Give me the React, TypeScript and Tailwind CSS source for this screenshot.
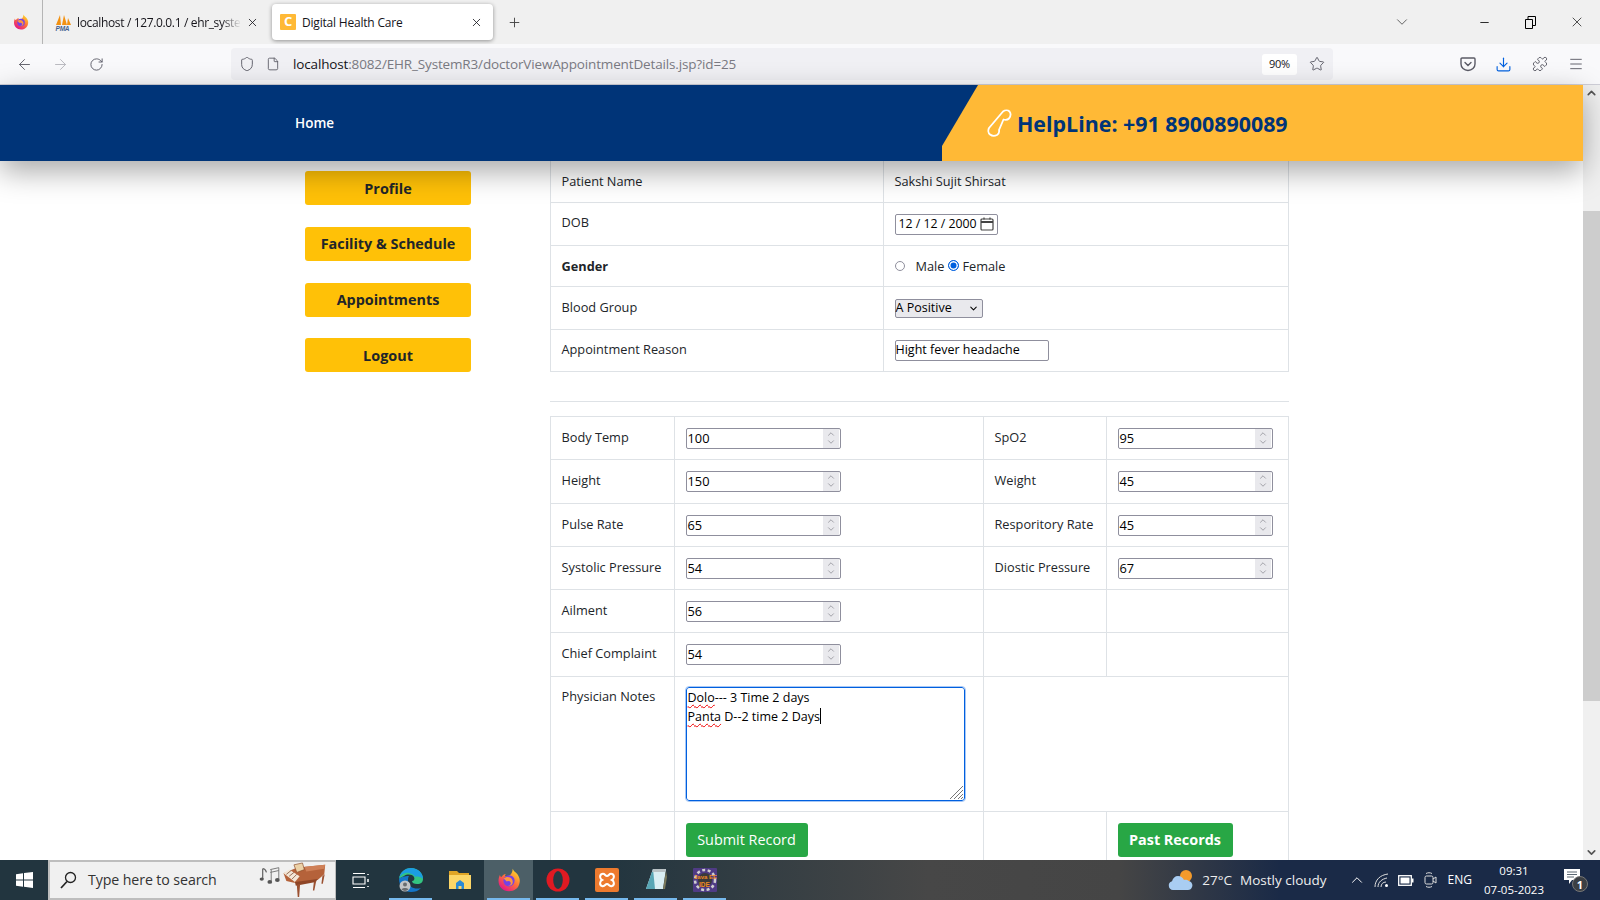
import { ReactNode } from 'react';
import { ChevronDown, ChevronUp, Download, Menu, Minus, Plus, RotateCw, ArrowLeft, ArrowRight, Shield, Star, X, File, Puzzle } from 'lucide-react';

const FirefoxIcon = ({ size }: { size: number }) => (
  <svg width={size} height={size} viewBox="0 0 32 32">
    <defs>
      <linearGradient id="ff-body" x1="0.8" y1="0.1" x2="0.2" y2="0.95">
        <stop offset="0" stopColor="#ffd02c" />
        <stop offset="0.45" stopColor="#ff7139" />
        <stop offset="1" stopColor="#e31587" />
      </linearGradient>
    </defs>
    <path d="M21 1c1 3 3 4 6 7 3 4 4 8 3 12-1 7-7 11-14 11C8 31 2 25 2 17c0-3 1-6 2-8 0 2 1 3 2 3 1-2 3-4 6-4-1 1-2 2-1 3 5 0 9-1 10-10z" fill="url(#ff-body)" />
    <circle cx="16" cy="17" r="7.5" fill="#7542e5" />
    <path d="M9 14c2-2 6-3 9-1 3 2 4 6 2 9-1 1-3 2-5 2 3-1 4-3 3-5-1-2-4-2-5-1l-4-4z" fill="#ff9640" />
  </svg>
);

const PmaIcon = () => (
  <svg width="17" height="17" viewBox="0 0 17 17">
    <path d="M1 11 5 1l1 10zM7 11l2-10 3 10zM12 11l1-7 3 7z" fill="#f29111" />
    <text x="0.5" y="16.5" fontSize="6.5" fontWeight="700" fontStyle="italic" fill="#44618f" fontFamily="Liberation Sans, sans-serif">PMA</text>
  </svg>
);

const PhoneOutline = () => (
  <svg width="25" height="28" viewBox="0 0 25 28" fill="none" stroke="#fff" strokeWidth="1.8" strokeLinejoin="round">
    <path d="M16 2.5c2-1.5 5-1.5 6.5 0 1.5 2 1 5-.5 7-1.500 1.500-3.500 1.500-5.500 1L12 21c.5 2-.5 4-2 5-2 1-5 1-7-.5C1 24 1 21 2 19z" />
  </svg>
);

const PocketIcon = () => (
  <svg width="16" height="16" viewBox="0 0 16 16" fill="none" stroke="#5b5b66" strokeWidth="1.4">
    <path d="M2 2h12a1 1 0 0 1 1 1v5c0 3.500-3 6.500-7 6.500S1 11.500 1 8V3a1 1 0 0 1 1-1z" />
    <path d="m5 6.500 3 3 3-3" strokeLinecap="round" />
  </svg>
);

const WindowsLogo = () => (
  <svg width="17" height="16" viewBox="0 0 17 16" fill="#fff">
    <path d="M0 2.300 7 1.300v6.300H0zM8 1.100 17 0v7.600H8zM0 8.500h7v6.300L0 13.800zM8 8.500h9V16l-9-1.200z" />
  </svg>
);

const SearchGlass = () => (
  <svg width="17" height="18" viewBox="0 0 17 18" fill="none" stroke="#222" strokeWidth="1.300">
    <circle cx="10.500" cy="6.500" r="5" />
    <path d="M7 10.500 1 17" strokeWidth="1.700" />
  </svg>
);

// music notes plus the little grand piano on the search box
const PianoDoodle = () => (
  <svg width="70" height="36" viewBox="0 0 70 38">
    <path d="M3 7v11M3 7c2 0 3 1 4 4" fill="none" stroke="#666" strokeWidth="1.300" />
    <ellipse cx="2" cy="18" rx="2.200" ry="1.700" fill="#555" />
    <path d="M11 8l9-2M11 11l9-2M12 8v12M20 6v12" stroke="#777" strokeWidth="1" fill="none" />
    <ellipse cx="10.500" cy="21" rx="2.500" ry="2" fill="#555" />
    <ellipse cx="18.500" cy="19" rx="2.500" ry="2" fill="#555" />
    <path d="M25 12 39 6l30-3-1 10-7 6-25 3-8-2z" fill="#b5623a" />
    <path d="M47 5l22-2-1 4-19 3z" fill="#cf8058" />
    <path d="M25 12l12 9 5-6-11-7z" fill="#f3e7d7" />
    <path d="M28 13l5-4M31 15l5-4M34 18l5-5" stroke="#7a4a30" strokeWidth="0.800" />
    <path d="M36 3l9-2 2 7-8 3z" fill="#ecd2a8" stroke="#8a4a28" strokeWidth="0.700" />
    <path d="M37 21l24-3-2 3-21 4z" fill="#8e4526" />
    <path d="M39 24l1 13h1.500l1-14zM57 21l-1 9h1.500l2-10zM66 15l-1 8h1.500l2-10z" fill="#9b5030" />
  </svg>
);

const TaskViewIcon = () => (
  <svg width="17" height="17" viewBox="0 0 17 17" fill="none" stroke="#fff" strokeWidth="1.100">
    <path d="M1 1.500h12M1 15.500h12M1 5h12v7H1z" />
    <path d="M16 2v1M16 7v3M16 14v1" strokeWidth="1.500" />
  </svg>
);

const EdgeIcon = () => (
  <svg width="26" height="26" viewBox="0 0 26 26">
    <path d="M1 12C2 5 7 1 13 1c7 0 12 5 12 11 0 3-2 5-6 5-3 0-5-1-5-3 2 0 3-2 2-4-2-3-7-3-10-1-2 1-4 2-5 3z" fill="#33c481" />
    <path d="M13 1C7 1 2 5 1 12c1-4 6-7 10-6 4 1 6 3 6 4 3-1 6 0 8 2 0-6-5-11-12-11z" fill="#1b9de2" />
    <path d="M1 12c0 7 5 13 12 13 4 0 7-1 10-4-6 2-13-1-13-7 0-2 0-4 1-5-4 0-9 1-10 3z" fill="#1475c8" />
    <circle cx="7" cy="19" r="5.500" fill="#c3c5c7" />
    <circle cx="7" cy="17.500" r="2" fill="#6a6d70" />
    <path d="M3.500 22.500c.5-2 6.500-2 7 0a5 5 0 0 1-7 0z" fill="#6a6d70" />
  </svg>
);

const ExplorerIcon = () => (
  <svg width="22" height="20" viewBox="0 0 22 20">
    <path d="M0 1h8l2 2h10v3H0z" fill="#e0a526" />
    <path d="M0 5h22v14H0z" fill="#fcd667" />
    <path d="M7 19v-6l4-3 4 3v6h-2.500v-3h-3v3z" fill="#2b8ad4" />
  </svg>
);

const OperaIcon = () => (
  <svg width="24" height="24" viewBox="0 0 24 24">
    <circle cx="12" cy="12" r="11.500" fill="#e01a22" />
    <ellipse cx="12" cy="12" rx="4.800" ry="9" fill="#263a43" />
  </svg>
);

const XamppIcon = () => (
  <svg width="24" height="24" viewBox="0 0 24 24">
    <rect width="24" height="24" rx="2" fill="#ed7a2e" />
    <path d="M7 6c3-1 3 2 5 2s2-3 5-2c3 1 2 5 0 6 2 1 3 5 0 6-3 1-3-2-5-2s-2 3-5 2c-3-1-2-5 0-6-2-1-3-5 0-6z" fill="none" stroke="#fff" strokeWidth="2" />
  </svg>
);

const NotepadIcon = () => (
  <svg width="24" height="24" viewBox="0 0 24 24">
    <path d="M9 1h13l-3 20H2z" fill="#d9eef3" />
    <path d="M9 1 2 21h9z" fill="#58a6b5" />
    <path d="M9 1h13l-1 3H8z" fill="#b9c2c5" />
    <path d="M19 21l3-18 1 6-2 12z" fill="#7b7a5c" />
  </svg>
);

const JavaEeIcon = () => (
  <svg width="24" height="24" viewBox="0 0 24 24">
    <rect width="24" height="24" rx="1" fill="#4f3b85" />
    <circle cx="12" cy="12" r="10" fill="none" stroke="#cfcfcf" strokeWidth="2.500" strokeDasharray="3 2.500" />
    <circle cx="12" cy="12" r="7" fill="#3a3a3a" />
    <text x="1" y="11" fontSize="6" fontWeight="700" fill="#f08a24" fontFamily="Liberation Sans, sans-serif">Java EE</text>
    <text x="6" y="19" fontSize="6.500" fontWeight="700" fill="#f08a24" fontFamily="Liberation Sans, sans-serif">IDE</text>
  </svg>
);

const WeatherIcon = () => (
  <svg width="26" height="22" viewBox="0 0 26 22">
    <circle cx="18" cy="7" r="6" fill="#f39a2b" />
    <path d="M5 21a4.500 4.500 0 0 1-1-8.800C5 9 7 7 10 7c3 0 5 2 6 4 1-.5 3-.5 5 1 3 1 4 4 3 6-.5 2-2 3-4 3z" fill="#a9cdf2" />
  </svg>
);

const WifiIcon = () => (
  <svg width="17" height="15" viewBox="0 0 17 15" fill="none" stroke="#ddd" strokeWidth="1">
    <path d="M1 14C1 7 6 2 14 1M4 14c0-5 4-8 9-9M7 14c0-3 2-5 5-5" />
    <circle cx="12.500" cy="12.500" r="1.500" fill="#fff" stroke="none" />
  </svg>
);

const BatteryIcon = () => (
  <svg width="16" height="11" viewBox="0 0 16 11">
    <rect x="0.700" y="0.700" width="12.600" height="9.600" fill="none" stroke="#fff" strokeWidth="1.300" />
    <rect x="2.500" y="2.500" width="9" height="6" fill="#fff" />
    <rect x="14" y="3.500" width="1.500" height="4" fill="#fff" />
  </svg>
);

const MeetIcon = () => (
  <svg width="13" height="18" viewBox="0 0 13 18" fill="none" stroke="#ddd" strokeWidth="1">
    <rect x="1" y="5" width="8" height="8" rx="1.500" />
    <path d="m9 8 3-2v6l-3-2M2 2.500c2-1 4-1 6 0M2 15.500c2 1 4 1 6 0" />
  </svg>
);

const NotificationIcon = () => (
  <div className="relative w-[24px] h-[24px]">
    <svg width="16" height="15" viewBox="0 0 16 15" className="absolute left-0 top-0">
      <path d="M0 0h16v11H8l-3 4v-4H0z" fill="#fff" />
      <path d="M3 3h10M3 5.500h10M3 8h7" stroke="#33424f" strokeWidth="0.800" />
    </svg>
    <div className="absolute left-[8px] top-[7px] w-[16px] h-[16px] rounded-full bg-[#3b3f44] border border-[#777] flex items-center justify-center text-white text-[11px] font-bold leading-none">1</div>
  </div>
);

const Cell = ({ children, className = '' }: { children?: ReactNode; className?: string }) => (
  <td className={`border border-[#dee2e6] align-top px-[10.500px] ${className}`}>{children}</td>
);

const Label = ({ children, bold }: { children: ReactNode; bold?: boolean }) => (
  <Cell className={`pt-[10px] leading-[20px] whitespace-nowrap ${bold ? 'font-bold' : ''}`}>{children}</Cell>
);

const NumberField = ({ value }: { value: string }) => (
  <div className="flex items-center w-[155px] h-[21px] border border-[#8f8f9d] rounded-[2px] bg-white text-[12.800px] text-black px-[1px] leading-none">
    <span className="flex-1">{value}</span>
    <span className="w-[16px] h-[19px] bg-[#e9e9ed] flex flex-col items-center justify-center text-[#77777f]">
      <ChevronUp size={10} strokeWidth={1.500} className="-mb-[1px]" />
      <ChevronDown size={10} strokeWidth={1.500} className="-mt-[1px]" />
    </span>
  </div>
);

const Misspelled = ({ children }: { children: ReactNode }) => (
  <span className="underline decoration-wavy decoration-[#e00] decoration-1 underline-offset-2">{children}</span>
);

const sideLinks = ['Profile', 'Facility & Schedule', 'Appointments', 'Logout'];

const vitals = [
  ['Body Temp', '100', 'SpO2', '95', 'h-[43px]'],
  ['Height', '150', 'Weight', '45', 'h-[44px]'],
  ['Pulse Rate', '65', 'Resporitory Rate', '45', 'h-[43px]'],
  ['Systolic Pressure', '54', 'Diostic Pressure', '67', 'h-[43px]'],
  ['Ailment', '56', '', '', 'h-[43px]'],
  ['Chief Complaint', '54', '', '', 'h-[44px]'],
];

const taskApps: { icon: ReactNode; active?: boolean; running?: boolean }[] = [
  { icon: <EdgeIcon />, running: true },
  { icon: <ExplorerIcon /> },
  { icon: <FirefoxIcon size={24} />, active: true, running: true },
  { icon: <OperaIcon />, running: true },
  { icon: <XamppIcon />, running: true },
  { icon: <NotepadIcon />, running: true },
  { icon: <JavaEeIcon />, running: true },
];

const App = () => {
  return (
    <div className="w-[1600px] h-[900px] flex flex-col overflow-hidden bg-white font-['Open_Sans',sans-serif] text-[12.750px] text-[#212529]">
      {/* tab strip */}
      <div className="h-[44px] shrink-0 bg-[#f0f0f0] flex items-center text-[12px] text-[#15141a] tracking-[-0.2px]">
        <div className="w-[43px] h-full flex items-center justify-center border-r border-[#b5b5b5]">
          <FirefoxIcon size={16} />
        </div>
        <div className="w-[229px] flex items-center pl-[12px] pr-[8px] gap-[5px]">
          <PmaIcon />
          <span className="w-[164px] pt-[1px] tracking-[-0.35px] whitespace-nowrap overflow-hidden [mask-image:linear-gradient(to_right,black_88%,transparent)]">localhost / 127.0.0.1 / ehr_system</span>
          <X size={13} strokeWidth={1.500} />
        </div>
        <div className="w-[221px] h-[36px] bg-white rounded-[4px] shadow-[0_1px_4px_rgba(0,0,0,0.4)] flex items-center pl-[8px] pr-[10px] gap-[6px]">
          <span className="w-[16px] h-[16px] bg-[#ffb936] rounded-[1px] text-white text-[13px] font-bold flex items-center justify-center">C</span>
          <span className="flex-1 pt-[1px]">Digital Health Care</span>
          <X size={13} strokeWidth={1.500} />
        </div>
        <Plus size={15} strokeWidth={1.500} className="ml-[14px] text-[#444]" />
        <div className="flex-1" />
        <ChevronDown size={18} strokeWidth={1.200} className="text-[#555] mr-[67px]" />
        <Minus size={13} strokeWidth={1.500} className="text-black mr-[34px]" />
        <svg width="11" height="13" viewBox="0 0 11 13" fill="none" stroke="#000" strokeWidth="1" className="mr-[33px]">
          <path d="M0.500 3.500h7v9h-7zM3 3.500V.5h7.500v9h-3" />
        </svg>
        <X size={16} strokeWidth={1} className="text-black mr-[15px]" />
      </div>

      {/* toolbar */}
      <div className="h-[41px] shrink-0 bg-[#f9f9fb] border-b border-[#cfcfd8] flex items-center text-[#5b5b66]">
        <ArrowLeft size={17} strokeWidth={1.300} className="ml-[16px]" />
        <ArrowRight size={17} strokeWidth={1.300} className="ml-[19px] text-[#b5b5bb]" />
        <RotateCw size={15} strokeWidth={1.500} className="ml-[20px]" />
        <div className="w-[1102px] h-[32px] ml-[127px] bg-[#f0f0f4] rounded-[4px] flex items-center pl-[8px] pr-[7px]">
          <Shield size={16} strokeWidth={1.400} />
          <File size={14} strokeWidth={1.500} className="ml-[11px]" />
          <span className="ml-[13px] flex-1 text-[13.500px] tracking-[-0.15px] text-[#7a7a82] whitespace-nowrap">
            <span className="text-[#15141a]">localhost</span>:8082/EHR_SystemR3/doctorViewAppointmentDetails.jsp?id=25
          </span>
          <span className="w-[35px] h-[21px] bg-white rounded-[3px] text-[11px] tracking-[-0.3px] text-[#15141a] flex items-center justify-center">90%</span>
          <Star size={16} strokeWidth={1.400} className="ml-[12px] mr-[1px]" />
        </div>
        <div className="ml-[127px]"><PocketIcon /></div>
        <Download size={17} strokeWidth={1.600} className="ml-[19px] text-[#0061e0]" />
        <Puzzle size={16} strokeWidth={1.400} className="ml-[20px]" />
        <Menu size={16} strokeWidth={1.400} className="ml-[20px]" />
      </div>

      {/* page */}
      <div className="flex-1 min-h-0 flex">
        <div className="flex-1 min-w-0 flex flex-col">
          <header className="relative z-10 h-[76px] shrink-0 bg-[#003478] shadow-[0_10px_30px_rgba(0,0,0,0.35)] flex items-center justify-between">
            <a className="ml-[295px] text-white font-semibold text-[13.500px]">Home</a>
            <div className="w-[641px] h-full bg-[#ffb936] [clip-path:polygon(36px_0,100%_0,100%_100%,0_100%,0_61px)] flex items-center pl-[45px] gap-[5px] text-[#003478] font-bold text-[21.400px] whitespace-nowrap">
              <PhoneOutline />
              <span className="mt-[2px]">HelpLine: +91 8900890089</span>
            </div>
          </header>

          <div className="flex-1 min-h-0 overflow-hidden flex">
            <aside className="ml-[305px] w-[166px] mr-[79px] pt-[10px] flex flex-col gap-[21.800px] shrink-0">
              {sideLinks.map((link) => (
                <a key={link} className="h-[34px] pt-[1px] bg-[#ffc107] rounded-[3px] flex items-center justify-center font-bold text-[14.400px] text-[#212529]">
                  {link}
                </a>
              ))}
            </aside>

            <main className="w-[739px] shrink-0">
              <table className="w-full border-collapse table-fixed">
                <colgroup>
                  <col className="w-[333px]" />
                  <col />
                </colgroup>
                <tbody>
                  <tr className="h-[41px]">
                    <Cell className="pt-[10px] leading-[20px] border-t-0">Patient Name</Cell>
                    <Cell className="pt-[10px] leading-[20px] border-t-0">Sakshi Sujit Shirsat</Cell>
                  </tr>
                  <tr className="h-[43px]">
                    <Cell className="pt-[9px] leading-[20px]">DOB</Cell>
                    <Cell className="pt-[11px]">
                      <div className="w-[103px] h-[21px] border border-[#8f8f9d] rounded-[2px] flex items-center pl-[3px] text-[12.300px] text-black">
                        <span className="flex-1 whitespace-nowrap">12 / 12 / 2000</span>
                        <svg width="14" height="14" viewBox="0 0 14 14" fill="none" stroke="#444" strokeWidth="1.200" className="mr-[3px]">
                          <rect x="1" y="2" width="12" height="11" rx="1" />
                          <path d="M1 5h12" strokeWidth="2" />
                          <path d="M4 .5v2M10 .5v2" />
                        </svg>
                      </div>
                    </Cell>
                  </tr>
                  <tr className="h-[41px]">
                    <Label bold>Gender</Label>
                    <Cell className="pt-[10px] leading-[20px]">
                      <div className="flex items-center">
                        <span className="w-[10px] h-[10px] rounded-full border border-[#8f8f9d]" />
                        <span className="ml-[11px]">Male</span>
                        <span className="ml-[4px] w-[11px] h-[11px] rounded-full border-[1.500px] border-[#0060df] bg-[#0060df] shadow-[inset_0_0_0_1.500px_white]" />
                        <span className="ml-[3px]">Female</span>
                      </div>
                    </Cell>
                  </tr>
                  <tr className="h-[43px]">
                    <Label>Blood Group</Label>
                    <Cell className="pt-[12px]">
                      <div className="w-[88px] h-[19px] border border-[#8f8f9d] rounded-[2px] bg-[#e9e9ed] flex items-center justify-between pr-[3px] text-[12.500px] text-black">
                        <span>A Positive</span>
                        <ChevronDown size={11} strokeWidth={2.200} />
                      </div>
                    </Cell>
                  </tr>
                  <tr className="h-[42px]">
                    <Cell className="pt-[9px] leading-[20px]">Appointment Reason</Cell>
                    <Cell className="pt-[10px]">
                      <div className="w-[154px] h-[21px] border border-[#8f8f9d] rounded-[2px] flex items-center text-[12.500px] text-black whitespace-nowrap">
                        Hight fever headache
                      </div>
                    </Cell>
                  </tr>
                </tbody>
              </table>

              <hr className="mt-[29px] border-[#dee2e6]" />

              <table className="mt-[14px] w-full border-collapse table-fixed">
                <colgroup>
                  <col className="w-[124px]" />
                  <col className="w-[309px]" />
                  <col className="w-[123px]" />
                  <col />
                </colgroup>
                <tbody>
                  {vitals.map(([label, value, label2, value2, height]) => (
                    <tr key={label} className={height}>
                      <Label>{label}</Label>
                      <Cell className="pt-[11px]"><NumberField value={value} /></Cell>
                      <Label>{label2}</Label>
                      <Cell className="pt-[11px]">{value2 && <NumberField value={value2} />}</Cell>
                    </tr>
                  ))}
                  <tr className="h-[135px]">
                    <Cell className="pt-[9px] leading-[20px]">Physician Notes</Cell>
                    <Cell className="pt-[10px]">
                      <div className="relative w-[279px] h-[114px] border-[1.500px] border-[#0060df] rounded-[3px] outline-[1.500px] outline-solid outline-[#a8c8f5] text-[12.500px] text-black leading-[19px] px-[1px]">
                        <div><Misspelled>Dolo</Misspelled>--- 3 Time 2 days</div>
                        <div className="flex items-center">
                          <span><Misspelled>Panta</Misspelled> D--2 time 2 Days</span>
                          <span className="w-px h-[16px] bg-black" />
                        </div>
                        <svg width="15" height="15" viewBox="0 0 15 15" stroke="#777" strokeWidth="1" className="absolute right-0 bottom-0">
                          <path d="M1 14 14 1M5 14l9-9M9 14l5-5M12 14l2-2" />
                        </svg>
                      </div>
                    </Cell>
                    <Cell className="border-r-0" />
                    <Cell className="border-l-0" />
                  </tr>
                  <tr className="h-[60px]">
                    <Cell />
                    <Cell className="pt-[11px]">
                      <button className="w-[122px] h-[34px] pt-[1px] bg-[#28a745] rounded-[3px] text-white text-[14.400px]">Submit Record</button>
                    </Cell>
                    <Cell />
                    <Cell className="pt-[11px]">
                      <button className="w-[115px] h-[34px] pt-[1px] bg-[#28a745] rounded-[3px] text-white font-bold text-[14.400px]">Past Records</button>
                    </Cell>
                  </tr>
                </tbody>
              </table>
            </main>
          </div>
        </div>

        {/* scrollbar */}
        <div className="w-[17px] shrink-0 bg-[#f0f0f0] flex flex-col items-center text-[#555]">
          <ChevronUp size={13} strokeWidth={3} className="mt-[1px] h-[14px]" />
          <div className="w-full h-[490px] mt-[111px] bg-[#cdcdcd]" />
          <div className="flex-1" />
          <ChevronDown size={13} strokeWidth={3} className="mb-[1px]" />
        </div>
      </div>

      {/* taskbar */}
      <div className="h-[40px] shrink-0 bg-[linear-gradient(to_right,#22353f_0,#22353f_38%,#474747_58%,#454545_70%,#1a2a47_80%)] flex items-center text-white">
        <div className="w-[48px] flex justify-center"><WindowsLogo /></div>
        <div className="w-[288px] h-full bg-[#f0f0f0] border-2 border-[#bdbdbd] border-r-[1px] flex items-center pl-[10px] pr-[7px] text-[#333] text-[14.200px] tracking-[-0.1px]">
          <SearchGlass />
          <span className="ml-[11px] flex-1">Type here to search</span>
          <PianoDoodle />
        </div>
        <div className="w-[50px] flex justify-center pr-[2px]"><TaskViewIcon /></div>
        {taskApps.map((app, i) => (
          <div key={i} className={`relative w-[49px] h-full flex items-center justify-center ${app.active ? 'bg-[#4c5f67]' : ''}`}>
            {app.icon}
            {app.running && <span className="absolute left-[3px] right-[3px] bottom-0 h-[2px] bg-[#76b9ed]" />}
          </div>
        ))}
        <div className="flex-1" />
        <WeatherIcon />
        <span className="ml-[8px] text-[13.500px] text-[#eee]">27°C</span>
        <span className="ml-[8px] text-[13.500px] text-[#eee]">Mostly cloudy</span>
        <ChevronUp size={18} strokeWidth={1.300} className="ml-[21px]" />
        <div className="ml-[8px]"><WifiIcon /></div>
        <div className="ml-[7px]"><BatteryIcon /></div>
        <div className="ml-[10px]"><MeetIcon /></div>
        <span className="ml-[11px] text-[12px]">ENG</span>
        <div className="ml-[12px] w-[60px] flex flex-col items-center text-[11.500px] leading-[19px] whitespace-nowrap">
          <span>09:31</span>
          <span>07-05-2023</span>
        </div>
        <div className="ml-[20px] mr-[12px] mt-[2px]"><NotificationIcon /></div>
      </div>
    </div>
  );
};

export default App;
